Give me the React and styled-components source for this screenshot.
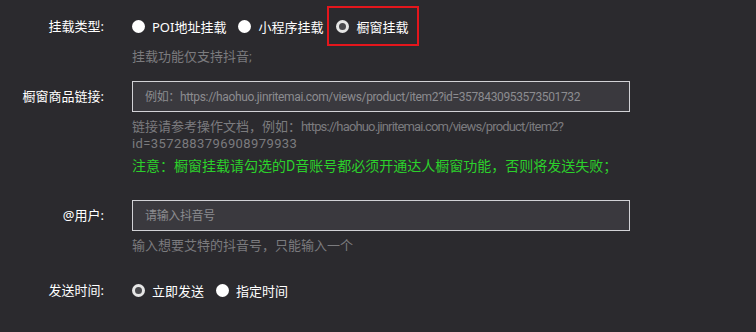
import styled, { createGlobalStyle } from 'styled-components';

const GlobalStyle = createGlobalStyle`
  html, body {
    margin: 0;
    padding: 0;
    background: #2b2a2e;
  }
  body {
    font-family: "Noto Sans", "Noto Sans CJK SC", sans-serif;
    color: #ffffff;
  }
`;

const Page = styled.div`
  width: 756px;
  height: 332px;
  background: #2b2a2e;
  padding-top: 6px;
  box-sizing: border-box;
  overflow: hidden;
`;

const Row = styled.div`
  display: grid;
  grid-template-columns: 104px 1fr;
  column-gap: 28px;
  align-items: start;
  margin-top: ${(p) => p.$top || 0}px;
`;

const Label = styled.div`
  text-align: right;
  font-size: 13px;
  color: #ffffff;
  line-height: ${(p) => p.$lh || 40}px;
  white-space: nowrap;
`;

const Field = styled.div`
  display: flex;
  flex-direction: column;
  width: 498px;
`;

const RadioGroup = styled.div`
  display: flex;
  align-items: center;
  height: 40px;
`;

const RadioItem = styled.label`
  display: flex;
  align-items: center;
  gap: 7px;
  font-size: 13px;
  color: #ffffff;
  height: 40px;
  box-sizing: border-box;
  padding: 0 ${(p) => (p.$boxed ? 9 : 0)}px 0 ${(p) => (p.$boxed ? 7 : 0)}px;
  margin-right: ${(p) => p.$mr || 12}px;
  border: ${(p) => (p.$boxed ? '2px solid #e4161c' : 'none')};
  white-space: nowrap;
`;

const Dot = styled.span`
  width: 13px;
  height: 13px;
  border-radius: 50%;
  box-sizing: border-box;
  background: ${(p) => (p.$checked ? '#4a4a4e' : '#ffffff')};
  border: ${(p) => (p.$checked ? '3px solid #e6e6e6' : 'none')};
  flex-shrink: 0;
`;

const Hint = styled.div`
  font-family: Roboto, "Noto Sans CJK SC", sans-serif;
  font-size: 13px;
  line-height: 17px;
  color: #7b7b7e;
  margin-top: ${(p) => p.$top || 0}px;
  white-space: nowrap;
`;

const Latin = styled.span`
  letter-spacing: ${(p) => p.$ls}px;
`;

const Warn = styled.div`
  font-family: Roboto, "Noto Sans CJK SC", sans-serif;
  font-size: 14px;
  line-height: 20px;
  color: #2bd12b;
  margin-top: 4px;
  white-space: nowrap;
`;

const Input = styled.input`
  width: 498px;
  height: 31px;
  box-sizing: border-box;
  background: #3a393e;
  border: 1px solid #d2d2d6;
  padding: 0 12px;
  font-family: Roboto, "Noto Sans CJK SC", sans-serif;
  font-size: 12px;
  letter-spacing: -0.35px;
  color: #ffffff;
  outline: none;
  margin-bottom: 6px;

  &::placeholder {
    color: #8c8c90;
  }
`;

export default function App() {
  return (
    <Page>
      <GlobalStyle />
      <Row>
        <Label>挂载类型:</Label>
        <Field>
          <RadioGroup>
            <RadioItem>
              <Dot />
              POI地址挂载
            </RadioItem>
            <RadioItem $mr={4}>
              <Dot />
              小程序挂载
            </RadioItem>
            <RadioItem $boxed>
              <Dot $checked />
              橱窗挂载
            </RadioItem>
          </RadioGroup>
          <Hint $top={2}>挂载功能仅支持抖音;</Hint>
        </Field>
      </Row>

      <Row $top={16}>
        <Label $lh={31}>橱窗商品链接:</Label>
        <Field>
          <Input placeholder="例如：https://haohuo.jinritemai.com/views/product/item2?id=3578430953573501732" />
          <Hint>
            链接请参考操作文档，例如：<Latin $ls={-0.85}>https://haohuo.jinritemai.com/views/product/item2?</Latin>
          </Hint>
          <Hint>
            <Latin $ls={0.4}>id=3572883796908979933</Latin>
          </Hint>
          <Warn>注意：橱窗挂载请勾选的D音账号都必须开通达人橱窗功能，否则将发送失败；</Warn>
        </Field>
      </Row>

      <Row $top={24}>
        <Label $lh={31}>@用户:</Label>
        <Field>
          <Input placeholder="请输入抖音号" />
          <Hint>输入想要艾特的抖音号，只能输入一个</Hint>
        </Field>
      </Row>

      <Row $top={16}>
        <Label>发送时间:</Label>
        <Field>
          <RadioGroup>
            <RadioItem>
              <Dot $checked />
              立即发送
            </RadioItem>
            <RadioItem>
              <Dot />
              指定时间
            </RadioItem>
          </RadioGroup>
        </Field>
      </Row>
    </Page>
  );
}
